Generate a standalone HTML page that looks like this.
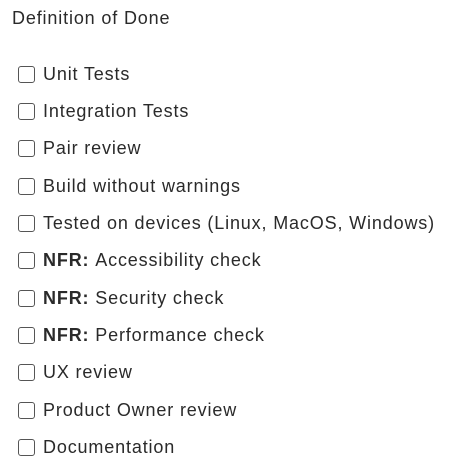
<!DOCTYPE html>
<html><head><style>
body{margin:0;width:474px;height:474px;background:#fff;font-family:"Liberation Sans",sans-serif;color:#2a2a2a;font-size:18px;letter-spacing:0.85px;}
.t{position:absolute;left:12px;top:8px;}
.r{position:absolute;left:18px;height:22px;display:flex;align-items:center;}
.b{width:17px;height:17px;border:1px solid #555;border-radius:3px;box-sizing:border-box;margin-right:8px;flex:none;}
</style></head><body>
<div class="t">Definition of Done</div>
<div class="r" style="top:63px"><div class="b"></div>Unit Tests</div>
<div class="r" style="top:100px"><div class="b"></div>Integration Tests</div>
<div class="r" style="top:137px"><div class="b"></div>Pair review</div>
<div class="r" style="top:175px"><div class="b"></div>Build without warnings</div>
<div class="r" style="top:212px"><div class="b"></div>Tested on devices (Linux, MacOS, Windows)</div>
<div class="r" style="top:249px"><div class="b"></div><b>NFR:</b>&nbsp;Accessibility check</div>
<div class="r" style="top:287px"><div class="b"></div><b>NFR:</b>&nbsp;Security check</div>
<div class="r" style="top:324px"><div class="b"></div><b>NFR:</b>&nbsp;Performance check</div>
<div class="r" style="top:361px"><div class="b"></div>UX review</div>
<div class="r" style="top:399px"><div class="b"></div>Product Owner review</div>
<div class="r" style="top:436px"><div class="b"></div>Documentation</div>
</body></html>
